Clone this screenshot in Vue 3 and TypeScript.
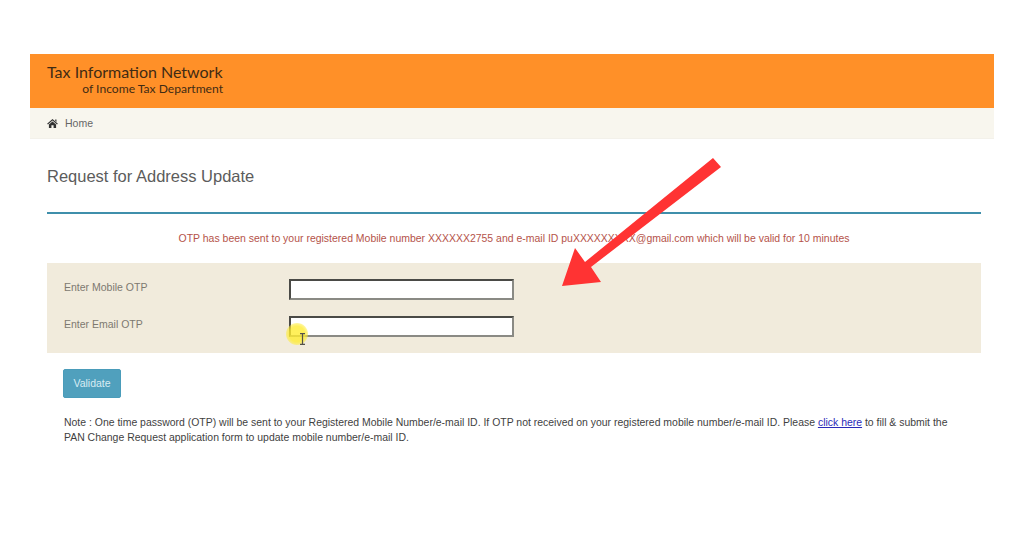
<script setup lang="ts">
const message = 'OTP has been sent to your registered Mobile number XXXXXX2755 and e-mail ID puXXXXXXXXX@gmail.com which will be valid for 10 minutes'
const fields: string[] = ['Enter Mobile OTP', 'Enter Email OTP']
</script>

<template>
  <div class="page">
    <header class="brand">
      <div class="logo">
        <div class="logo-main">Tax Information Network</div>
        <div class="logo-sub">of Income Tax Department</div>
      </div>
    </header>
    <nav class="crumb">
      <svg class="home" viewBox="0 0 12 10" width="11" height="9" aria-hidden="true">
        <path d="M6 0 L12 5.2 L11 6 L6 1.8 L1 6 L0 5.2 Z M9 0.6 H10.4 V3.2 L9 2 Z M2 6 L6 2.7 L10 6 V10 H7.2 V7 H4.8 V10 H2 Z" fill="#333" />
      </svg>
      <span>Home</span>
    </nav>
    <main class="content">
      <h1 class="title">Request for Address Update</h1>
      <p class="message">{{ message }}</p>
      <form class="panel" @submit.prevent>
        <div v-for="f in fields" :key="f" class="row">
          <label class="label">{{ f }}</label>
          <input class="otp" type="text" />
        </div>
      </form>
      <div class="actions">
        <button class="validate" type="button">Validate</button>
      </div>
      <p class="note">
        Note : One time password (OTP) will be sent to your Registered Mobile Number/e-mail ID. If OTP not received on your registered mobile number/e-mail ID. Please <a href="#">click here</a> to fill &amp; submit the PAN Change Request application form to update mobile number/e-mail ID.
      </p>
    </main>

    <span class="spot"></span>
    <svg class="cursor" viewBox="0 0 7 12" width="7" height="12" aria-hidden="true">
      <path d="M1 .7 H6 M3.5 .7 V11.3 M1 11.3 H6" stroke="#55524a" stroke-width="1.2" fill="none" />
    </svg>
    <svg class="arrow" viewBox="0 0 170 135" width="170" height="135" aria-hidden="true">
      <path d="M153 1 L161 10 L31 110 L41 125 L2 129 L15 91 L25 105 Z" fill="#ff3333" />
    </svg>
  </div>
</template>

<style scoped>
.page {
  position: relative;
  box-sizing: border-box;
  width: 1024px;
  height: 536px;
  padding: 54px 30px 0;
  background: #fff;
  overflow: hidden;
  font-family: "Liberation Sans", Arial, sans-serif;
}
.brand {
  height: 54px;
  background: #ff9028;
  padding: 9px 0 0 17px;
  box-sizing: border-box;
}
.logo {
  display: inline-block;
  width: 176px;
  font-family: Lato, "Open Sans", sans-serif;
  color: #3f2b14;
}
.logo-main {
  font-size: 16px;
  line-height: 18px;
  margin-bottom: 1px;
  white-space: nowrap;
}
.logo-sub {
  font-size: 12.1px;
  line-height: 14px;
  text-align: right;
  white-space: nowrap;
}
.crumb {
  height: 31px;
  background: #f8f6ee;
  display: flex;
  align-items: center;
  gap: 7px;
  padding: 0 0 0 17px;
  font-size: 10.5px;
  color: #666;
  border-bottom: 1px solid #f3f1ea;
  box-sizing: border-box;
}
.content {
  padding: 0 13px 0 17px;
}
.title {
  margin: 0;
  height: 75px;
  box-sizing: border-box;
  padding-top: 27px;
  border-bottom: 2px solid #3f8fab;
  font-size: 16.5px;
  line-height: 20px;
  font-weight: 400;
  color: #5c5c5c;
}
.message {
  margin: 0;
  height: 49px;
  padding-top: 18px;
  box-sizing: border-box;
  font-size: 10.47px;
  line-height: 14px;
  text-align: center;
  white-space: nowrap;
  color: #b5534a;
}
.panel {
  height: 90px;
  background: #f1ebdc;
  padding: 16px 0 0 17px;
  box-sizing: border-box;
  display: flex;
  flex-direction: column;
  gap: 16px;
}
.row {
  display: flex;
  align-items: flex-start;
  height: 21px;
}
.label {
  width: 225px;
  padding-top: 1px;
  font-size: 10.5px;
  line-height: 15px;
  color: #7d7970;
}
.otp {
  width: 225px;
  height: 21px;
  box-sizing: border-box;
  background: #fff;
  border: 2px solid;
  border-color: #4a4a46 #8a8a84 #8a8a84 #4a4a46;
  padding: 0;
  outline: none;
}
.actions {
  padding: 16px 0 0 16px;
}
.validate {
  display: block;
  width: 58px;
  height: 29px;
  padding: 0 0 2px;
  border: 1px solid #4a9cba;
  border-radius: 2px;
  background: #50a0bd;
  color: #d8ecf3;
  font-family: inherit;
  font-size: 10.5px;
}
.note {
  margin: 17px 16px 0 17px;
  font-size: 10.46px;
  line-height: 15px;
  color: #3f3f3f;
}
.note a {
  color: #2a2ab8;
  text-decoration: underline;
}
.spot {
  position: absolute;
  left: 286px;
  top: 323px;
  width: 22px;
  height: 22px;
  border-radius: 50%;
  background: radial-gradient(circle, rgba(255, 236, 50, 0.8) 50%, rgba(255, 236, 50, 0) 100%);
}
.cursor {
  position: absolute;
  left: 299px;
  top: 333px;
}
.arrow {
  position: absolute;
  left: 560px;
  top: 157px;
}
</style>
